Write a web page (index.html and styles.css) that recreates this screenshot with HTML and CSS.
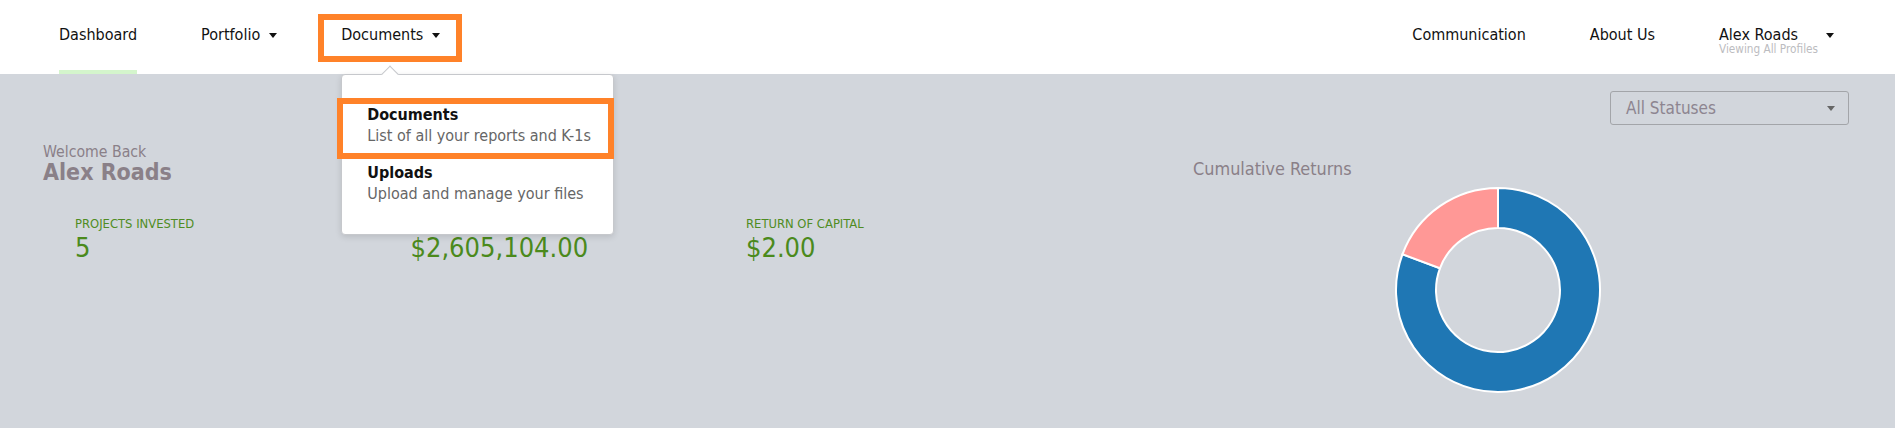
FILE: index.html
```html
<!DOCTYPE html>
<html lang="en">
<head>
<meta charset="utf-8">
<title>Dashboard</title>
<link rel="stylesheet" href="styles.css">
</head>
<body>
<header class="topbar">
  <nav class="nav nav-left">
    <a class="nav-item active"><span class="nav-label">Dashboard</span></a>
    <a class="nav-item"><span class="nav-label">Portfolio<i class="caret"></i></span></a>
    <div class="nav-item open">
      <span class="nav-label highlighted">Documents<i class="caret"></i></span>
      <div class="dropdown">
        <a class="dd-item highlighted-item">
          <span class="dd-title">Documents</span>
          <span class="dd-desc">List of all your reports and K-1s</span>
        </a>
        <a class="dd-item">
          <span class="dd-title">Uploads</span>
          <span class="dd-desc">Upload and manage your files</span>
        </a>
      </div>
    </div>
  </nav>
  <nav class="nav nav-right">
    <a class="nav-item"><span class="nav-label">Communication</span></a>
    <a class="nav-item"><span class="nav-label">About Us</span></a>
    <div class="nav-item user">
      <div class="user-info">
        <span class="nav-label">Alex Roads</span>
        <span class="user-sub">Viewing All Profiles</span>
      </div>
      <span class="user-caret"><i class="caret"></i></span>
    </div>
  </nav>
</header>

<main class="content">
  <div class="toolbar">
    <div class="select">
      <span class="select-text">All Statuses</span>
      <i class="caret caret-gray"></i>
    </div>
  </div>
  <div class="panels">
    <section class="overview">
      <div class="welcome">Welcome Back</div>
      <div class="user-name">Alex Roads</div>
      <div class="stats">
        <div class="stat">
          <div class="stat-label">PROJECTS INVESTED</div>
          <div class="stat-value">5</div>
        </div>
        <div class="stat">
          <div class="stat-label">TOTAL INVESTED</div>
          <div class="stat-value">$2,605,104.00</div>
        </div>
        <div class="stat">
          <div class="stat-label">RETURN OF CAPITAL</div>
          <div class="stat-value">$2.00</div>
        </div>
      </div>
    </section>
    <section class="returns">
      <h2 class="returns-title">Cumulative Returns</h2>
      <div class="chart">
        <svg class="donut" width="210" height="210" viewBox="0 0 210 210">
          <path fill="#1f77b4" stroke="#ffffff" stroke-width="2" d="M105 3 A102 102 0 1 1 9.46 69.28 L46.92 83.29 A62 62 0 1 0 105 43 Z"/>
          <path fill="#ff9896" stroke="#ffffff" stroke-width="2" d="M9.46 69.28 A102 102 0 0 1 105 3 L105 43 A62 62 0 0 0 46.92 83.29 Z"/>
        </svg>
      </div>
    </section>
  </div>
</main>
</body>
</html>
```

FILE: styles.css
```css
* { box-sizing: border-box; }

html, body {
  margin: 0;
  padding: 0;
}

body {
  font-family: "DejaVu Sans Condensed", "DejaVu Sans", sans-serif;
  font-stretch: condensed;
  background: #d2d6dc;
  color: #111;
  height: 428px;
  overflow: hidden;
}

a { color: inherit; text-decoration: none; }

/* ---------- top bar ---------- */
.topbar {
  height: 74px;
  background: #ffffff;
  display: flex;
  justify-content: space-between;
  padding: 0 61px 0 59px;
  position: relative;
  z-index: 5;
}

.nav {
  display: flex;
  gap: 64px;
  height: 74px;
}

.nav-item {
  position: relative;
  height: 74px;
  padding-top: 25px;
  font-size: 16px;
  line-height: 20px;
  color: #111;
  cursor: pointer;
}

.nav-item.active {
  border-bottom: 4px solid #d4f5cc;
}

.nav-label {
  position: relative;
  display: flex;
  align-items: center;
  white-space: nowrap;
}

.caret {
  display: inline-block;
  width: 0;
  height: 0;
  border-left: 4px solid transparent;
  border-right: 4px solid transparent;
  border-top: 5px solid #111;
  margin-left: 9px;
}

.highlighted::after {
  content: "";
  position: absolute;
  left: -23px;
  right: -22px;
  top: -11px;
  bottom: -17px;
  border: 6px solid #ff8229;
  pointer-events: none;
}

/* ---------- dropdown ---------- */
.dropdown {
  position: absolute;
  left: 0;
  top: 74px;
  width: 273px;
  background: #ffffff;
  border: 1px solid #c6c8cc;
  border-radius: 4px;
  box-shadow: 0 2px 6px rgba(0, 0, 0, 0.12);
  padding: 21px 0 22px;
  display: flex;
  flex-direction: column;
}

.dropdown::before {
  content: "";
  position: absolute;
  left: 42px;
  top: -7px;
  width: 11px;
  height: 11px;
  background: #ffffff;
  border-left: 1px solid #c6c8cc;
  border-top: 1px solid #c6c8cc;
  transform: rotate(45deg);
}

.dd-item {
  position: relative;
  display: flex;
  flex-direction: column;
  padding: 8px 12px 8px 25px;
  line-height: 21px;
  font-size: 16px;
}

.dd-title {
  font-weight: bold;
  color: #111;
}

.dd-desc {
  color: #666;
  white-space: nowrap;
}

.highlighted-item::after {
  content: "";
  position: absolute;
  left: -5px;
  right: -1px;
  top: 2px;
  bottom: -5px;
  border: 6px solid #ff8229;
  pointer-events: none;
}

/* ---------- user ---------- */
.user {
  display: flex;
  align-items: flex-start;
  gap: 8px;
}

.user-info {
  display: flex;
  flex-direction: column;
}

.user-sub {
  font-size: 11.7px;
  line-height: 13px;
  margin-top: -2px;
  color: #bcbcc0;
  white-space: nowrap;
}

.user-caret {
  height: 20px;
  display: flex;
  align-items: center;
}

.user-caret .caret { margin-left: 0; }

/* ---------- content ---------- */
.content {
  padding: 17px 46px 0 43px;
}

.toolbar {
  display: flex;
  justify-content: flex-end;
}

.select {
  width: 239px;
  height: 34px;
  border: 1px solid #a3a5a9;
  border-radius: 3px;
  display: flex;
  align-items: center;
  justify-content: space-between;
  padding: 0 13px 0 15px;
}

.select-text {
  font-size: 17px;
  color: #8d8590;
}

.caret-gray {
  border-top-color: #666;
  margin-left: 0;
}

.panels {
  display: grid;
  grid-template-columns: 1150px 610px;
  margin-top: 18px;
}

.overview { color: #8a8088; }

.welcome {
  font-size: 15.7px;
  line-height: 17px;
}

.user-name {
  font-size: 23px;
  line-height: 25px;
  font-weight: bold;
}

.stats {
  display: grid;
  grid-template-columns: repeat(3, 335.5px);
  padding-left: 32px;
  margin-top: 31px;
}

.stat-label {
  font-size: 12.9px;
  line-height: 15px;
  color: #4f8c23;
}

.stat-value {
  font-size: 27px;
  line-height: 32px;
  margin-top: 1px;
  color: #4b8a1c;
}

.returns {
  padding-top: 15px;
}

.returns-title {
  margin: 0;
  font-size: 17.9px;
  line-height: 21px;
  font-weight: normal;
  color: #8a8088;
}

.chart {
  display: flex;
  justify-content: center;
  margin-top: 6px;
}

.donut { display: block; }
```
